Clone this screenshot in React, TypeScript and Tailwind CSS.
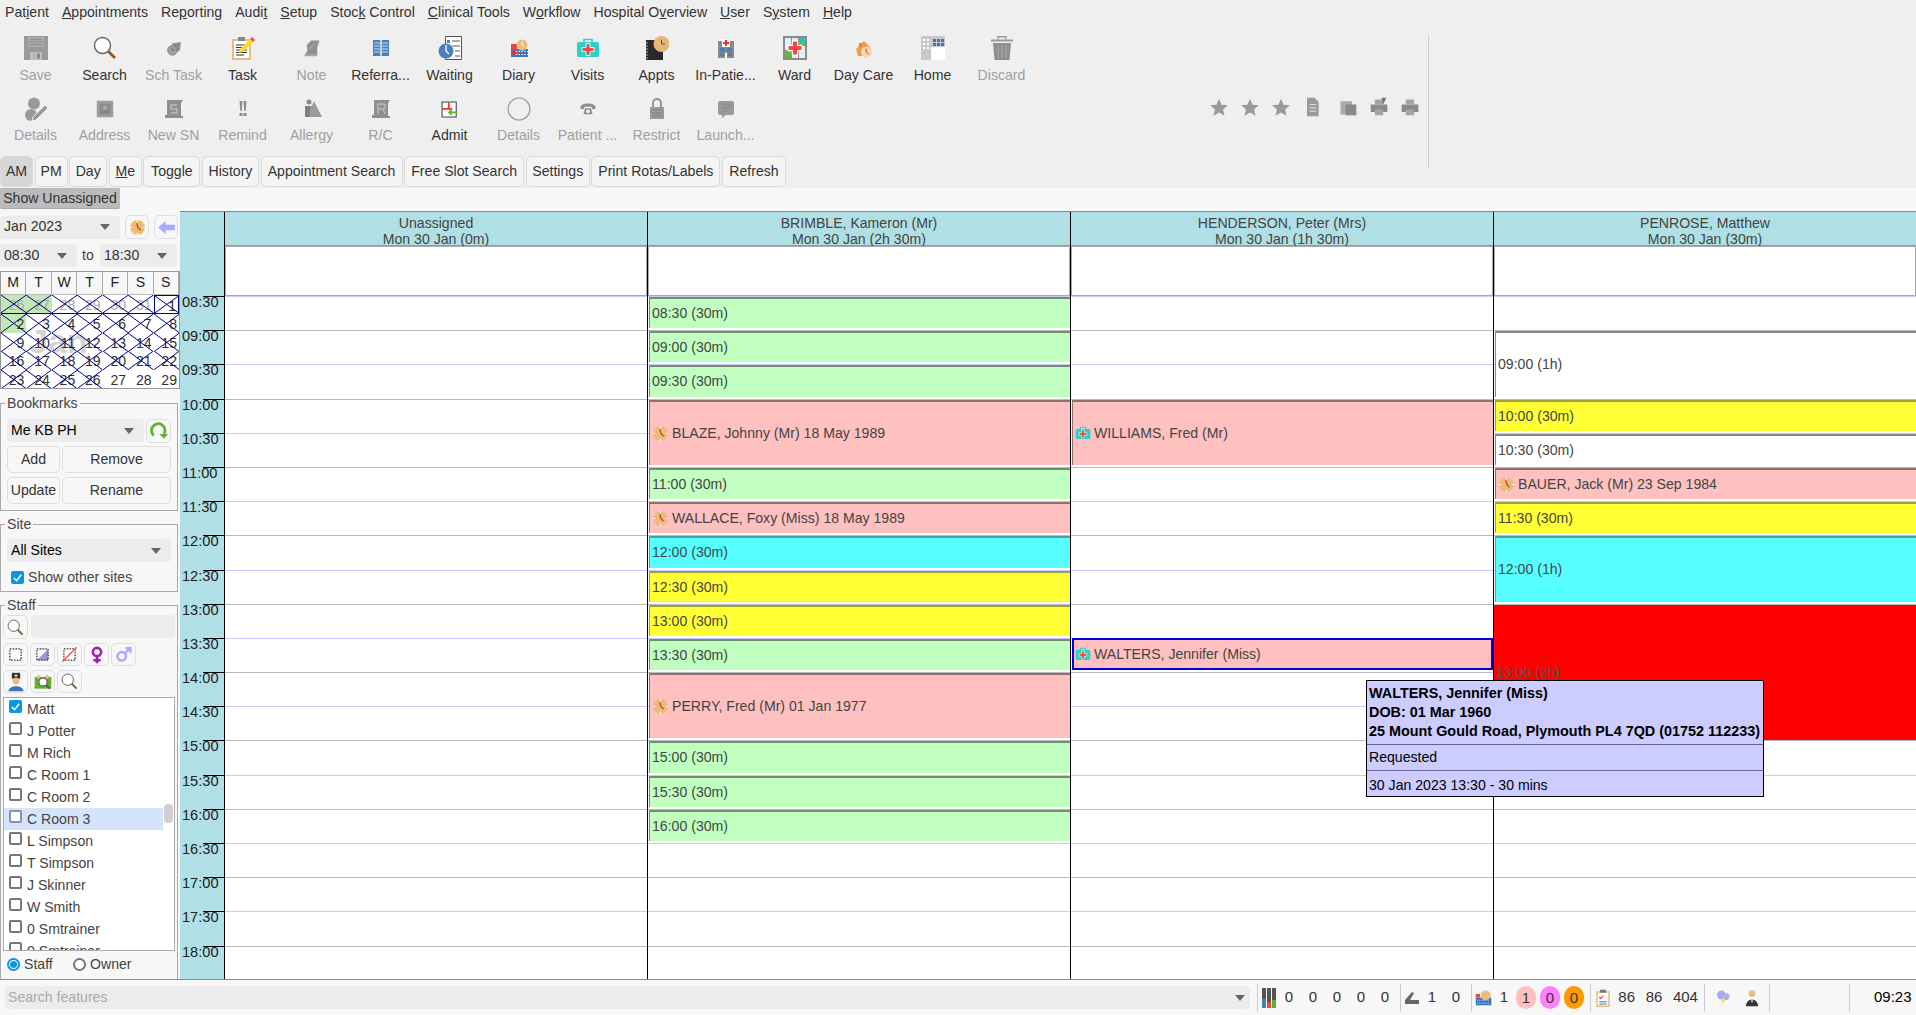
import type { ReactNode } from 'react';

const Svg = ({ children, size = 24 }: { children: ReactNode; size?: number }) => (
  <svg viewBox="0 0 24 24" width={size} height={size} className="shrink-0">
    {children}
  </svg>
);

const GRAY = '#9a9a9a';

// small drawings reused in the toolbar, the appointments and the status bar
const ClockTan = ({ size = 24 }: { size?: number }) => (
  <Svg size={size}>
    <circle cx="12" cy="12" r="10.5" fill="#e8bd78" />
    <path d="M12 1.5v3M12 19.5v3M1.5 12h3M19.5 12h3" stroke="#fff" strokeWidth="1.6" />
    <path d="M11 6l1.5 6 4 4" fill="none" stroke="#e53935" strokeWidth="2" />
  </Svg>
);
const Case = ({ size = 24 }: { size?: number }) => (
  <Svg size={size}>
    <path d="M8 6V3.5h8V6" fill="none" stroke="#30d0c8" strokeWidth="1.6" />
    <rect x="1" y="6" width="22" height="15" rx="1.5" fill="#30d0c8" />
    <path d="M12 8.5v10M7 13.5h10" stroke="#f44" strokeWidth="3" />
    <path d="M10 7.5h4v4h4v4h-4v4h-4v-4H6v-4h4z" fill="none" stroke="#e9fbfa" strokeWidth=".8" />
  </Svg>
);
const Glass = ({ size = 24 }: { size?: number }) => (
  <Svg size={size}>
    <path d="M14 14l8 8" stroke="#8a5a22" strokeWidth="2.6" />
    <circle cx="9.5" cy="9.5" r="8" fill="#fff" stroke="#666" strokeWidth="1.4" />
  </Svg>
);
const Star = () => (
  <Svg size={20}>
    <path d="M12 2l3 7.4 7.6.6-5.8 5 1.9 7.6L12 18.6 5.3 22.6l1.9-7.6-5.8-5 7.6-.6z" fill={GRAY} />
  </Svg>
);

const toolbarIcons: Record<string, ReactNode> = {
  Save: (
    <Svg>
      <path d="M0 0h24v24H0z" fill={GRAY} />
      <path d="M4 1h16v10H4z" fill="#aaa" />
      <path d="M6 3.5h12M6 6h12M6 8.5h12" stroke="#8c8c8c" />
      <path d="M6 16h12v8H6z" fill="#bbb" />
      <path d="M13 17.5h3v5h-3z" fill="#888" />
    </Svg>
  ),
  Search: <Glass />,
  'Sch Task': (
    <Svg size={18}>
      <path d="M9 6l9-1.5 3-1-1 11.5-6 3z" fill="#8c8c8c" />
      <circle cx="10" cy="15" r="6.5" fill="#a0a0a0" stroke="#777" />
      <path d="M10 11v4h3" fill="none" stroke="#666" />
    </Svg>
  ),
  Task: (
    <Svg>
      <path d="M1 3h19v21H1z" fill="#e9bd7d" />
      <path d="M3 5h15v17H3z" fill="#fff" />
      <path d="M7 1h7v4H7z" fill="#888" />
      <path d="M5 9h11M5 11.5h11M5 14h11M5 16.5h11M5 19h8" stroke="#333" />
      <path d="M9 13L19 3l3 3-10 10-4 1z" fill="#fadb2c" />
      <path d="M19 3l2-2 3 3-2 2z" fill="#f44" />
    </Svg>
  ),
  Note: (
    <Svg size={18}>
      <path d="M5 8l6-6h11l-3 9v10H4v-4h2z" fill="#8f8f8f" />
      <path d="M8 14l8-8" stroke="#bbb" />
      <path d="M2 20h17v3H2z" fill="#a5a5a5" />
    </Svg>
  ),
  'Referra...': (
    <Svg>
      <path d="M4 4h16v16H4z" fill="#4a7fbb" />
      <path d="M12 4v16" stroke="#efefef" strokeWidth="1.4" />
      <path d="M5 7h6M13 7h6M5 10h6M13 10h6M5 13h6M13 13h6M5 16h6M13 16h6" stroke="#cfe0f2" />
    </Svg>
  ),
  Waiting: (
    <Svg>
      <path d="M7.5.5h16v23h-16z" fill="#fff" stroke="#555" />
      <path d="M9 4h3v3H9z" fill="#4a7fbb" />
      <path d="M14 5h8M14 10h8M17 15h5M17 20h5" stroke="#555" />
      <circle cx="8" cy="15" r="7.5" fill="#4a7fbb" />
      <path d="M8 9v6l3 3" fill="none" stroke="#fff" strokeWidth="1.3" />
    </Svg>
  ),
  Diary: (
    <Svg>
      <path d="M4 13h17v8H4z" fill="#3e75b8" />
      <path d="M6 15.5h15M6 18.5h15" stroke="#fff" strokeDasharray="1.4 1.4" />
      <path d="M4 8h6v5H4z" fill="#ee4444" />
      <path d="M7 13v7M4 17h6" stroke="#ee3333" strokeWidth="2" />
      <circle cx="15" cy="9" r="5.5" fill="#e9bd7d" />
      <path d="M15 5.5V9l2.5 2" fill="none" stroke="#fff" />
    </Svg>
  ),
  Visits: <Case />,
  Appts: (
    <Svg>
      <path d="M1 4h17v20H1z" fill="#2a2a2a" />
      <path d="M1 7h2M1 10h2M1 13h2M1 16h2M1 19h2M1 22h2" stroke="#aaa" />
      <circle cx="16.5" cy="8" r="8" fill="#e4b878" />
      <path d="M16.5 3.5V8h3.5" fill="none" stroke="#6d4c20" />
    </Svg>
  ),
  'In-Patie...': (
    <Svg>
      <path d="M4 5h16v17H4z" fill="#8a8a8a" />
      <path d="M8 3h8v8H8z" fill="#fff" />
      <path d="M12 4v6M9 7h6" stroke="#ee3333" strokeWidth="2" />
      <path d="M6 12h5v4H6zM13 12h5v4h-5zM6 17h4v3H6zM14 17h4v3h-4z" fill="#4a7fbb" />
      <path d="M11 17h2v5h-2z" fill="#fff" />
    </Svg>
  ),
  Ward: (
    <Svg>
      <path d="M0 0h24v24H0z" fill="#8a8a8a" />
      <path d="M2 2h6v20H2zM9 2h6v20H9zM16 2h6v20h-6z" fill="#dfeefa" />
      <path d="M2 14h6v8H2zM16 2h6v8h-6z" fill="#62bb2e" />
      <path d="M16 2h6v6h-6z" fill="#30c0b8" />
      <path d="M12 4.5v15M4.5 12h15" stroke="#fff" strokeWidth="6.5" />
      <path d="M12 5.5v13M5.5 12h13" stroke="#f44" strokeWidth="4" />
    </Svg>
  ),
  'Day Care': (
    <Svg>
      <path d="M4 13l8-8 7 7-1 8H6z" fill="#ef9a4a" />
      <path d="M7 7h3v4H7z" fill="#e08a3a" />
      <circle cx="14.5" cy="16" r="5.5" fill="#f5d9a8" />
      <path d="M14 12.5l.5 3.5 2.5 2.5" fill="none" stroke="#e53935" />
    </Svg>
  ),
  Home: (
    <Svg>
      <path d="M0 0h24v24H0z" fill="#c8c8c8" />
      <path d="M10 11h14v13H10z" fill="#fff" />
      <path d="M12 3h3v3h-3zM16 3h3v3h-3zM20 3h3v3h-3zM12 7h3v3h-3zM16 7h3v3h-3zM20 7h3v3h-3z" fill="#3e75b8" />
      <path d="M2 3h2v2H2zM6 3h2v2H6zM2 7h2v2H2zM6 7h2v2H6zM2 11h2v2H2zM6 11h2v2H6z" fill="#fff" />
    </Svg>
  ),
  Discard: (
    <Svg>
      <path d="M1 3.5h22v2H1z" fill={GRAY} />
      <path d="M8 3.5V.8h8v2.7" fill="none" stroke={GRAY} strokeWidth="1.4" />
      <path d="M3 7h18l-1.5 17h-15z" fill="#8f8f8f" />
      <path d="M8 9v13M12 9v13M16 9v13" stroke="#a8a8a8" strokeWidth="1.2" />
    </Svg>
  ),
  Details: (
    <Svg>
      <circle cx="10" cy="6.5" r="6" fill={GRAY} />
      <circle cx="7" cy="18" r="6" fill={GRAY} />
      <path d="M9 20L21 8l3 3-12 12-4 1z" fill={GRAY} stroke="#efefef" />
    </Svg>
  ),
  Address: (
    <Svg>
      <path d="M4 4h16v16H4z" fill={GRAY} stroke="#aaa" strokeDasharray="1.5 1" />
      <path d="M7 7h10v10H7z" fill="#888" />
      <circle cx="12" cy="10.5" r="2.5" fill="#a8a8a8" />
    </Svg>
  ),
  'New SN': (
    <Svg>
      <path d="M5 3h16l-2 3v13h2v2H3v-3h2z" fill="#8f8f8f" />
      <path d="M15 8H9v4h6v4H9" fill="none" stroke="#bbb" strokeWidth="1.4" />
    </Svg>
  ),
  Remind: (
    <Svg>
      <path d="M8.5 4l.8 10h1.4l.8-10zM12.5 4l.8 10h1.4l.8-10z" fill="#8c8c8c" />
      <path d="M8.5 16h3v3h-3zM12.5 16h3v3h-3z" fill="#8c8c8c" />
    </Svg>
  ),
  Allergy: (
    <Svg>
      <circle cx="9" cy="5" r="2.5" fill="#8a8a8a" />
      <path d="M5 9h7l2-5 8 16H5z" fill={GRAY} />
      <path d="M5 9h5v11H5z" fill="#7f7f7f" />
    </Svg>
  ),
  'R/C': (
    <Svg>
      <path d="M5 3h16l-2 3v13h2v2H3v-3h2z" fill="#8f8f8f" />
      <path d="M9 17V7h5a2.5 2.5 0 010 5H9m5 0l2 5" fill="none" stroke="#bbb" strokeWidth="1.4" />
    </Svg>
  ),
  Admit: (
    <Svg size={17}>
      <path d="M1.5 1.5h20v21h-20z" fill="#fff" stroke="#444" strokeWidth="1.5" />
      <path d="M11 2v9M2 11h14" stroke="#ee3333" strokeWidth="2.5" />
      <path d="M11 16h12M15 12.5L11.5 16l3.5 3.500" fill="none" stroke="#5bb32b" strokeWidth="2.5" />
    </Svg>
  ),
  'Details-2': (
    <Svg>
      <circle cx="12" cy="12" r="11" fill="none" stroke={GRAY} strokeWidth="1.2" />
    </Svg>
  ),
  'Patient ...': (
    <Svg size={18}>
      <path d="M2 10C2 3 22 3 22 10v2h-5V9H7v3H2z" fill="#8f8f8f" />
      <path d="M6 19l2-8h8l2 8z" fill="#8f8f8f" />
      <circle cx="12" cy="15" r="2.5" fill="#efefef" />
    </Svg>
  ),
  Restrict: (
    <Svg>
      <path d="M8 10V6a4 4 0 018 0v4" fill="none" stroke="#8f8f8f" strokeWidth="1.8" />
      <path d="M5 10h14v12H5z" fill={GRAY} />
      <path d="M7 13h10M7 16h10M7 19h10" stroke="#808080" />
    </Svg>
  ),
  'Launch...': (
    <Svg>
      <path d="M6 4h12a2 2 0 012 2v10a2 2 0 01-2 2h-6l-4 3v-3H6a2 2 0 01-2-2V6a2 2 0 012-2z" fill={GRAY} />
      <path d="M7 8h10M7 11h10M7 14h7" stroke="#8a8a8a" />
    </Svg>
  ),
};

const menu: ReactNode[] = [
  <>Pat<u>i</u>ent</>,
  <><u>A</u>ppointments</>,
  <>Re<u>p</u>orting</>,
  <>Audi<u>t</u></>,
  <><u>S</u>etup</>,
  <>Stoc<u>k</u> Control</>,
  <><u>C</u>linical Tools</>,
  <>W<u>o</u>rkflow</>,
  <>Hospital O<u>v</u>erview</>,
  <><u>U</u>ser</>,
  <>S<u>y</u>stem</>,
  <><u>H</u>elp</>,
];

const row1 = [
  { k: 'Save', off: true }, { k: 'Search' }, { k: 'Sch Task', off: true }, { k: 'Task' }, { k: 'Note', off: true },
  { k: 'Referra...' }, { k: 'Waiting' }, { k: 'Diary' }, { k: 'Visits' }, { k: 'Appts' },
  { k: 'In-Patie...' }, { k: 'Ward' }, { k: 'Day Care' }, { k: 'Home' }, { k: 'Discard', off: true },
];
const row2 = [
  { k: 'Details', off: true }, { k: 'Address', off: true }, { k: 'New SN', off: true }, { k: 'Remind', off: true },
  { k: 'Allergy', off: true }, { k: 'R/C', off: true }, { k: 'Admit' }, { k: 'Details-2', label: 'Details', off: true },
  { k: 'Patient ...', off: true }, { k: 'Restrict', off: true }, { k: 'Launch...', off: true },
];

const barButtons: { label: ReactNode; w: string; on?: boolean }[] = [
  { label: 'AM', w: 'w-[33px]', on: true },
  { label: 'PM', w: 'w-[33px]' },
  { label: 'Day', w: 'w-[38px]' },
  { label: <><u>M</u>e</>, w: 'w-[33px]' },
  { label: <>To<u>g</u>gle</>, w: 'w-[57px]' },
  { label: 'History', w: 'w-[57px]' },
  { label: 'Appointment Search', w: 'w-[142px]' },
  { label: 'Free Slot Search', w: 'w-[120px]' },
  { label: 'Settings', w: 'w-[64px]' },
  { label: 'Print Rotas/Labels', w: 'w-[129px]' },
  { label: 'Refresh', w: 'w-[64px]' },
];

const times = [
  '08:30', '09:00', '09:30', '10:00', '10:30', '11:00', '11:30', '12:00', '12:30', '13:00',
  '13:30', '14:00', '14:30', '15:00', '15:30', '16:00', '16:30', '17:00', '17:30', '18:00',
];

const kinds = {
  green: 'bg-[#c0ffc0] border-t-2 border-l border-[#6f8f6f] mt-px mb-[2px] ml-px',
  pink: 'bg-[#ffc0c0] border-t-2 border-l border-[#8f6f6f] mt-px mb-[2px] ml-px',
  cyan: 'bg-[#55ffff] border-t-2 border-l border-[#4f9f9f] mt-px mb-[2px] ml-px',
  yellow: 'bg-[#ffff33] border-t-2 border-l border-[#9f9f3f] mt-px mb-[2px] ml-px',
  white: 'bg-white border-t-2 border-l border-[#888] mt-px mb-[2px] ml-px',
  red: 'bg-[#ff0000] mt-px',
  sel: 'bg-[#ffc0c0] border-2 border-[#0000dd] mb-[2px] ml-px pt-px',
};

type Appt = { start: number; span: number; kind: keyof typeof kinds; text: string; icon?: 'clock' | 'case' };

const slot = (start: number, text: string, kind: keyof typeof kinds = 'green', span = 1, icon?: Appt['icon']): Appt => ({
  start,
  span,
  kind,
  text,
  icon,
});

const columns: { name: string; sub: string; appts: Appt[] }[] = [
  { name: 'Unassigned', sub: 'Mon 30 Jan (0m)', appts: [] },
  {
    name: 'BRIMBLE, Kameron (Mr)',
    sub: 'Mon 30 Jan (2h 30m)',
    appts: [
      slot(0, '08:30 (30m)'),
      slot(1, '09:00 (30m)'),
      slot(2, '09:30 (30m)'),
      slot(3, 'BLAZE, Johnny (Mr) 18 May 1989', 'pink', 2, 'clock'),
      slot(5, '11:00 (30m)'),
      slot(6, 'WALLACE, Foxy (Miss) 18 May 1989', 'pink', 1, 'clock'),
      slot(7, '12:00 (30m)', 'cyan'),
      slot(8, '12:30 (30m)', 'yellow'),
      slot(9, '13:00 (30m)', 'yellow'),
      slot(10, '13:30 (30m)'),
      slot(11, 'PERRY, Fred (Mr) 01 Jan 1977', 'pink', 2, 'clock'),
      slot(13, '15:00 (30m)'),
      slot(14, '15:30 (30m)'),
      slot(15, '16:00 (30m)'),
    ],
  },
  {
    name: 'HENDERSON, Peter (Mrs)',
    sub: 'Mon 30 Jan (1h 30m)',
    appts: [
      slot(3, 'WILLIAMS, Fred (Mr)', 'pink', 2, 'case'),
      slot(10, 'WALTERS, Jennifer (Miss)', 'sel', 1, 'case'),
    ],
  },
  {
    name: 'PENROSE, Matthew',
    sub: 'Mon 30 Jan (30m)',
    appts: [
      slot(1, '09:00 (1h)', 'white', 2),
      slot(3, '10:00 (30m)', 'yellow'),
      slot(4, '10:30 (30m)', 'white'),
      slot(5, 'BAUER, Jack (Mr) 23 Sep 1984', 'pink', 1, 'clock'),
      slot(6, '11:30 (30m)', 'yellow'),
      slot(7, '12:00 (1h)', 'cyan', 2),
      slot(9, '13:00 (2h)', 'red', 4),
    ],
  },
];

const staffNames = [
  'Matt', 'J Potter', 'M Rich', 'C Room 1', 'C Room 2', 'C Room 3',
  'L Simpson', 'T Simpson', 'J Skinner', 'W Smith', '0 Smtrainer', '0 Smtrainer',
];

const calendar: { n: number; prev?: boolean; cross: boolean; green?: boolean }[] = [
  ...[26, 27, 28, 29, 30, 31].map((n, i) => ({ n, prev: true, cross: true, green: i < 2 })),
  { n: 1, cross: true },
  ...Array.from({ length: 21 }, (_, i) => ({ n: i + 2, cross: true, green: i === 0 })),
  ...[23, 24, 25, 26, 27, 28, 29].map((n) => ({ n, cross: n < 27 })),
];

function Arrow() {
  return <span className="w-0 h-0 border-x-[5px] border-t-[6px] border-x-transparent border-t-[#666]" />;
}

function Select({ label, w, dark }: { label: string; w: string; dark?: boolean }) {
  return (
    <div className={`${w} h-[23px] shrink-0 rounded-[4px] bg-[#ececec] flex items-center justify-between pl-[4px] pr-[10px]`}>
      <span className={dark ? 'text-black' : 'text-[#333]'}>{label}</span>
      <Arrow />
    </div>
  );
}

function Btn({ children, className }: { children: ReactNode; className: string }) {
  return (
    <div className={`${className} shrink-0 flex items-center justify-center rounded-[5px] border border-[#dedede] bg-[#f7f7f7] text-[#333]`}>
      {children}
    </div>
  );
}

function Check({ on, dim }: { on?: boolean; dim?: boolean }) {
  if (on) {
    return (
      <span className="w-[13px] h-[13px] shrink-0 rounded-[2px] bg-[#0a96e0] flex items-center justify-center">
        <svg viewBox="0 0 12 12" width="11" height="11">
          <path d="M2 6.5l3 3 5-6.5" fill="none" stroke="#fff" strokeWidth="1.6" />
        </svg>
      </span>
    );
  }
  return <span className={`w-[13px] h-[13px] shrink-0 rounded-[2px] border-2 ${dim ? 'border-[#8a93a5]' : 'border-[#777]'} bg-white`} />;
}

function Group({ title, className, children }: { title: string; className: string; children: ReactNode }) {
  return (
    <fieldset className={`${className} border border-[#aaa] w-[178px]`}>
      <legend className="ml-[4px] px-[2px] leading-[18px] text-[#444]">{title}</legend>
      {children}
    </fieldset>
  );
}

function MiniCalendar() {
  return (
    <div className="relative mt-[4px] w-[180px] h-[118px] border border-[#999] bg-white overflow-hidden">
      <div className="absolute left-[28px] top-[51px] text-[#d4d4d4] text-[34px] leading-[36px] font-bold">Jan</div>
      <div className="relative grid grid-cols-7 h-[23px] bg-[#f7f7f7] border-b border-[#bbb]">
        {['M', 'T', 'W', 'T', 'F', 'S', 'S'].map((d, i) => (
          <div key={i} className="flex items-center justify-center border-r border-[#aaa] text-[#222]">
            {d}
          </div>
        ))}
      </div>
      <div className="relative grid grid-cols-7 grid-rows-[repeat(5,18.8px)]">
        {calendar.map((c, i) => (
          <div
            key={i}
            className={`relative text-right pr-[2px] leading-[21px] ${c.prev ? 'text-[#aaa]' : 'text-[#333]'} ${c.green ? 'bg-[#c2e8b4]' : ''} ${i < 6 ? 'border-b border-[#00008b]' : ''} ${i === 6 ? 'border border-[#00008b]' : ''}`}
          >
            {c.n}
            {c.cross && (
              <svg className="absolute inset-0 w-full h-full" viewBox="0 0 10 10" preserveAspectRatio="none">
                <path d="M0 0L10 10M10 0L0 10" stroke="#00008b" strokeWidth="1" vectorEffect="non-scaling-stroke" />
              </svg>
            )}
          </div>
        ))}
      </div>
    </div>
  );
}

function Sidebar() {
  return (
    <aside className="w-[180px] shrink-0 pt-[6px] text-[#444]">
      <div className="flex items-center">
        <Select label="Jan 2023" w="w-[120px]" />
        <Btn className="ml-[5px] w-[24px] h-[24px]"><ClockTan size={17} /></Btn>
        <Btn className="ml-[5px] w-[24px] h-[24px]">
          <svg viewBox="0 0 18 14" width="17" height="13">
            <path d="M8 0v4h10v6H8v4L0 7z" fill="#a9a9ff" />
          </svg>
        </Btn>
      </div>
      <div className="mt-[5px] flex items-center">
        <Select label="08:30" w="w-[77px]" />
        <span className="ml-[5px] w-[18px]">to</span>
        <Select label="18:30" w="w-[77px]" />
      </div>
      <MiniCalendar />

      <Group title="Bookmarks" className="mt-[5px] h-[117px]">
        <div className="mt-[7px] ml-[6px] flex gap-[2px]">
          <Select label="Me KB PH" w="w-[137px]" dark />
          <Btn className="w-[25px] h-[24px]">
            <svg viewBox="0 0 24 24" width="19" height="19">
              <path d="M6 17A8.5 8.5 0 1 1 19 15" fill="none" stroke="#5bb32b" strokeWidth="3.5" />
              <path d="M13 15h11l-5 6z" fill="#5bb32b" />
            </svg>
          </Btn>
        </div>
        <div className="mt-[3px] ml-[6px] flex gap-[2px]">
          <Btn className="w-[53px] h-[27px]">Add</Btn>
          <Btn className="w-[109px] h-[27px]">Remove</Btn>
        </div>
        <div className="mt-[4px] ml-[6px] flex gap-[2px]">
          <Btn className="w-[53px] h-[27px]">Update</Btn>
          <Btn className="w-[109px] h-[27px]">Rename</Btn>
        </div>
      </Group>

      <Group title="Site" className="mt-[4px] h-[77px]">
        <div className="mt-[6px] ml-[6px]">
          <Select label="All Sites" w="w-[164px]" dark />
        </div>
        <label className="mt-[5px] ml-[10px] flex items-center gap-[4px]">
          <Check on />
          Show other sites
        </label>
      </Group>

      <Group title="Staff" className="mt-[4px] h-[385px]">
        <div className="mt-[1px] ml-[2px] flex gap-[3px]">
          <Btn className="w-[25px] h-[24px]"><Glass size={17} /></Btn>
          <div className="w-[144px] h-[23px] rounded-[4px] bg-[#ececec]" />
        </div>
        <div className="mt-[4px] ml-[2px] flex gap-[2px]">
          <Btn className="w-[25px] h-[23px]">
            <Svg size={15}><path d="M3 3h18v18H3z" fill="#fff" stroke="#333" strokeWidth="2" strokeDasharray="2.5 2" /></Svg>
          </Btn>
          <Btn className="w-[25px] h-[23px]">
            <Svg size={15}>
              <path d="M3 21L21 3v18z" fill="#9a9ad8" />
              <path d="M3 3h18v18H3z" fill="none" stroke="#333" strokeWidth="2" strokeDasharray="2.5 2" />
            </Svg>
          </Btn>
          <Btn className="w-[25px] h-[23px]">
            <Svg size={15}>
              <path d="M3 3h18v18H3z" fill="#fff" stroke="#333" strokeWidth="2" strokeDasharray="2.5 2" />
              <path d="M0 24L24 0" stroke="#f55" strokeWidth="2.5" />
            </Svg>
          </Btn>
          <Btn className="w-[25px] h-[23px]">
            <Svg size={18}>
              <circle cx="12" cy="8" r="5.5" fill="none" stroke="#a020b0" strokeWidth="3.5" />
              <path d="M12 14v9M7 19h10" stroke="#a020b0" strokeWidth="3.5" />
            </Svg>
          </Btn>
          <Btn className="w-[25px] h-[23px]">
            <Svg size={17}>
              <circle cx="9.5" cy="14.5" r="6" fill="none" stroke="#a9a9ff" strokeWidth="3.5" />
              <path d="M14 10l8-7M15 3h7v7" fill="none" stroke="#a9a9ff" strokeWidth="3" />
            </Svg>
          </Btn>
        </div>
        <div className="mt-[4px] ml-[2px] flex gap-[2px]">
          <Btn className="w-[25px] h-[23px]">
            <Svg size={20}>
              <path d="M7 1h10v7H7z" fill="#333" />
              <path d="M12 2.500v4M10 4.500h4" stroke="#fff" />
              <circle cx="12" cy="11" r="4" fill="#e9bd7d" />
              <path d="M3 23c0-8 18-8 18 0z" fill="#3e75b8" />
            </Svg>
          </Btn>
          <Btn className="w-[25px] h-[23px]">
            <Svg size={20}>
              <path d="M2 6h20v14H2z" fill="#5bb32b" />
              <path d="M5 4h4v4H5zM15 4h4v4h-4z" fill="#e9bd7d" />
              <path d="M15 15l5 5" stroke="#555" strokeWidth="2" />
              <circle cx="12" cy="12" r="5" fill="#fff" stroke="#555" strokeWidth="1.4" />
            </Svg>
          </Btn>
          <Btn className="w-[25px] h-[23px]"><Glass size={17} /></Btn>
        </div>
        <div className="relative mt-[4px] ml-[2px] w-[172px] h-[254px] border border-[#aaa] bg-white overflow-hidden">
          {staffNames.map((name, i) => (
            <div
              key={i}
              className={`h-[22px] w-[159px] flex items-start gap-[5px] pl-[5px] pt-[2px] leading-[18px] ${i === 5 ? 'bg-[#d4e4fb]' : ''}`}
            >
              <Check on={i === 0} dim={i === 5} />
              <span>{name}</span>
            </div>
          ))}
          <div className="absolute right-[1px] top-[106px] w-[9px] h-[19px] rounded-[4px] bg-[#cfcfcf]" />
        </div>
        <div className="mt-[3px] ml-[6px] flex items-center">
          <span className="w-[13px] h-[13px] rounded-full border-2 border-[#0a96e0] bg-white flex items-center justify-center">
            <span className="w-[7px] h-[7px] rounded-full bg-[#0a96e0]" />
          </span>
          <span className="ml-[4px] w-[49px]">Staff</span>
          <span className="w-[13px] h-[13px] rounded-full border-2 border-[#777] bg-white" />
          <span className="ml-[4px]">Owner</span>
        </div>
      </Group>
    </aside>
  );
}

function Column({ name, sub, appts, last }: { name: string; sub: string; appts: Appt[]; last: boolean }) {
  return (
    <div className={`flex-1 min-w-0 flex flex-col ${last ? '' : 'border-r border-black'}`}>
      <div className="h-[34px] shrink-0 bg-[#b0dfe5] border-b border-[#999] text-center text-[#444] leading-[16px] pt-[3px]">
        <div>{name}</div>
        <div>{sub}</div>
      </div>
      <div className="h-[50px] shrink-0 bg-white border border-[#aaa]" />
      <div className="grid grid-rows-[repeat(20,34.2px)] bg-white">
        {times.map((t, i) => (
          <div
            key={t}
            style={{ gridRow: i + 1, gridColumn: 1 }}
            className={`border-t ${i % 2 === 0 ? 'border-[#c8c8ff]' : 'border-[#bbb]'}`}
          />
        ))}
        {appts.map((a) => (
          <div
            key={a.start}
            style={{ gridRow: `${a.start + 1} / span ${a.span}`, gridColumn: 1 }}
            className={`${kinds[a.kind]} z-10 flex items-center gap-[3px] ${a.kind === 'sel' ? 'pl-[1px]' : 'pl-[2px]'} ${a.kind === 'red' ? 'text-[#555]' : 'text-[#444]'}`}
          >
            {a.icon === 'clock' && <ClockTan size={17} />}
            {a.icon === 'case' && <Case size={16} />}
            <span>{a.text}</span>
          </div>
        ))}
      </div>
    </div>
  );
}

function Schedule() {
  return (
    <section className="relative flex-1 min-w-0 mt-[2px] flex h-[768px] overflow-hidden border-t border-[#888]">
      <div className="w-[45px] shrink-0 bg-[#b0dfe5] border-r border-black">
        <div className="h-[84px]" />
        {times.map((t) => (
          <div key={t} className="h-[34.2px] flex flex-col">
            <div className="self-end w-[21px] h-px bg-black" />
            <div className="pl-[2px] -mt-px leading-[13px] text-[#222] text-[14.6px]">{t}</div>
          </div>
        ))}
      </div>
      {columns.map((c, i) => (
        <Column key={c.name} name={c.name} sub={c.sub} appts={c.appts} last={i === columns.length - 1} />
      ))}
      <div className="absolute z-20 left-[1186px] top-[468px] w-[398px] h-[117px] bg-[#ccccff] border border-black text-black leading-[19px] pl-[2px] whitespace-nowrap">
        <div className="pt-[3px] font-bold text-[14.4px]">
          <div>WALTERS, Jennifer (Miss)</div>
          <div>DOB: 01 Mar 1960</div>
          <div>25 Mount Gould Road, Plymouth PL4 7QD (01752 112233)</div>
        </div>
        <div className="absolute left-0 right-0 top-[63px] h-[27px] border-y border-[#66668c] pl-[2px] pt-[3px]">Requested</div>
        <div className="absolute left-[2px] top-[95px]">30 Jan 2023 13:30 - 30 mins</div>
      </div>
    </section>
  );
}

function StatusBar() {
  const num = 'text-center text-[#333] text-[15px]';
  return (
    <footer className="h-[36px] shrink-0 flex items-center border-t border-[#8a8a95] bg-[#f7f7f7] text-[#333]">
      <div className="ml-[5px] w-[1245px] h-[23px] rounded-[4px] bg-[#ececec] flex items-center justify-between pl-[3px] pr-[5px]">
        <span className="text-[#aaa] pt-px">Search features</span>
        <Arrow />
      </div>
      <div className="ml-[7px] w-[143px] h-[28px] border-l border-[#ccc] pl-[3px] flex items-center">
        <svg viewBox="0 0 16 22" width="16" height="22">
          <path d="M1 1h4v20H1z" fill="#4a7fbb" />
          <path d="M6 1h4v20H6z" fill="#ee4444" />
          <path d="M11 1h4v20h-4z" fill="#5bb32b" />
          <path d="M1 1h4v11H1zM6 1h4v14H6zM11 1h4v12h-4z" fill="#555" />
        </svg>
        {[0, 0, 0, 0, 0].map((n, i) => (
          <span key={i} className={`w-[24px] ${num}`}>{n}</span>
        ))}
      </div>
      <div className="w-[71px] h-[28px] border-l border-[#ccc] pl-[3px] flex items-center">
        <svg viewBox="0 0 16 16" width="16" height="16">
          <path d="M1 10L8 2l2 1-4 7h9v4H1z" fill="#666" />
        </svg>
        <span className={`w-[24px] ${num}`}>1</span>
        <span className={`w-[24px] ${num}`}>0</span>
      </div>
      <div className="w-[119px] h-[28px] border-l border-[#ccc] pl-[3px] flex items-center">
        <Svg size={17}>
          <path d="M1 12h22v11H1z" fill="#3e75b8" />
          <path d="M3 16h18M3 20h18" stroke="#fff" strokeDasharray="1.500 1.500" />
          <path d="M1 7h6v5H1z" fill="#ee4444" />
          <circle cx="15" cy="9" r="7" fill="#e9bd7d" />
        </Svg>
        <span className={`w-[24px] ${num}`}>1</span>
        <span className="w-[20px] h-[23px] rounded-full bg-[#ffc0c0] text-center leading-[23px] text-[15px]">1</span>
        <span className="ml-[4px] w-[20px] h-[23px] rounded-full bg-[#ff80ff] text-center leading-[23px] text-[15px]">0</span>
        <span className="ml-[4px] w-[20px] h-[23px] rounded-full bg-[#ff9900] text-center leading-[23px] text-[15px]">0</span>
      </div>
      <div className="w-[114px] h-[28px] border-l border-[#ccc] pl-[3px] flex items-center">
        <Svg size={18}>
          <path d="M3 3h18v21H3z" fill="#e9bd7d" />
          <path d="M5 5h14v17H5z" fill="#fff" />
          <path d="M8 1h8v4H8z" fill="#777" />
          <path d="M7 11l2 2 3-4" fill="none" stroke="#e33" strokeWidth="1.5" />
          <path d="M7 17h10M7 20h10" stroke="#3e75b8" strokeWidth="1.4" />
        </Svg>
        <span className={`w-[30px] ${num}`}>86</span>
        <span className={`w-[26px] ${num}`}>86</span>
        <span className={`w-[38px] ${num}`}>404</span>
      </div>
      <div className="w-[65px] h-[28px] border-l border-[#ccc] pl-[9px] flex items-center gap-[11px]">
        <Svg size={18}>
          <circle cx="10" cy="8" r="6" fill="#a9a9ff" />
          <circle cx="16" cy="10" r="4.500" fill="#a9a9ff" />
          <path d="M14 9l-5 7h3l-3 7 6-8h-3l3-6z" fill="#f4e030" />
        </Svg>
        <Svg size={18}>
          <circle cx="12" cy="6" r="4.500" fill="#e9bd7d" />
          <path d="M4 23c0-12 16-12 16 0z" fill="#333" />
          <path d="M12 12v6" stroke="#fff" strokeWidth="1.500" />
        </Svg>
      </div>
      <div className="w-[80px] h-[28px] border-l border-[#ccc]" />
      <div className="flex-1 h-[28px] border-l border-[#ccc] pl-[24px] flex items-center text-black text-[15px]">09:23</div>
    </footer>
  );
}

export default function App() {
  return (
    <div className="w-[1916px] h-[1015px] overflow-hidden flex flex-col bg-[#f7f7f7] text-[14.1px] font-['Liberation_Sans',Arial,sans-serif]">
      {/* Menu */}
      <nav className="h-[24px] shrink-0 bg-[#efefef] flex items-center gap-[13px] pl-[5px] pt-[1px] text-[#333]">
        {menu.map((m, i) => (
          <span key={i}>{m}</span>
        ))}
      </nav>

      {/* Toolbars */}
      <div className="h-[164px] shrink-0 bg-[#efefef] flex">
        <div className="w-[1428px] shrink-0">
          <div className="h-[61px] pt-[12px] pl-[1px] flex">
            {row1.map((b) => (
              <div key={b.k} className="w-[69px] shrink-0 flex flex-col items-center">
                <div className="h-[24px] flex items-center">{toolbarIcons[b.k]}</div>
                <span className={`mt-[6px] leading-[18px] ${b.off ? 'text-[#a0a0a0]' : 'text-[#333]'}`}>{b.k}</span>
              </div>
            ))}
          </div>
          <div className="h-[71px] pt-[12px] pl-[1px] flex">
            {row2.map((b) => (
              <div key={b.k} className="w-[69px] shrink-0 flex flex-col items-center">
                <div className="h-[24px] flex items-center">{toolbarIcons[b.k]}</div>
                <span className={`mt-[5px] leading-[18px] ${b.off ? 'text-[#a0a0a0]' : 'text-[#333]'}`}>{b.label ?? b.k}</span>
              </div>
            ))}
            <div className="ml-[449px] -mt-[2px] flex h-[24px] gap-[11px] items-center">
              <Star />
              <Star />
              <Star />
              <Svg size={20}>
                <path d="M6 1h9l5 5v17H6z" fill={GRAY} />
                <path d="M9 9h8M9 13h8M9 17h8" stroke="#efefef" />
              </Svg>
              <span className="ml-[5px]">
                <Svg size={20}>
                  <path d="M3 5h14v16H3z" fill="#aaa" />
                  <path d="M9 9h13v13H9z" fill="#8a8a8a" />
                </Svg>
              </span>
              <Svg size={20}>
                <path d="M2 9h20v9H2z" fill="#8a8a8a" />
                <path d="M7 3h10v6H7zM7 15h10v7H7z" fill="#a5a5a5" />
                <path d="M15 1l6 0-4 8z" fill="#777" />
              </Svg>
              <Svg size={20}>
                <path d="M2 9h20v9H2z" fill="#8a8a8a" />
                <path d="M7 3h10v6H7zM7 15h10v7H7z" fill="#a5a5a5" />
              </Svg>
            </div>
          </div>
          <div className="flex gap-[1.6px] h-[32px]">
            {barButtons.map((b, i) => (
              <div
                key={i}
                className={`${b.w} h-[31px] flex items-center justify-center rounded-[5px] border border-[#dadada] text-[#333] ${b.on ? 'bg-[#d6d6d6]' : 'bg-[#f4f4f4]'}`}
              >
                {b.label}
              </div>
            ))}
          </div>
        </div>
        <div className="mt-[11px] h-[134px] border-l border-[#ccc]" />
      </div>

      <div className="h-[21px] shrink-0">
        <div className="w-[120px] h-[21px] bg-[#bbb] border-b border-[#aaa] rounded-b-[2px] text-[#333] flex items-center justify-center pt-[2px]">
          Show Unassigned
        </div>
      </div>

      <main className="flex-1 min-h-0 flex">
        <Sidebar />
        <Schedule />
      </main>
      <StatusBar />
    </div>
  );
}
